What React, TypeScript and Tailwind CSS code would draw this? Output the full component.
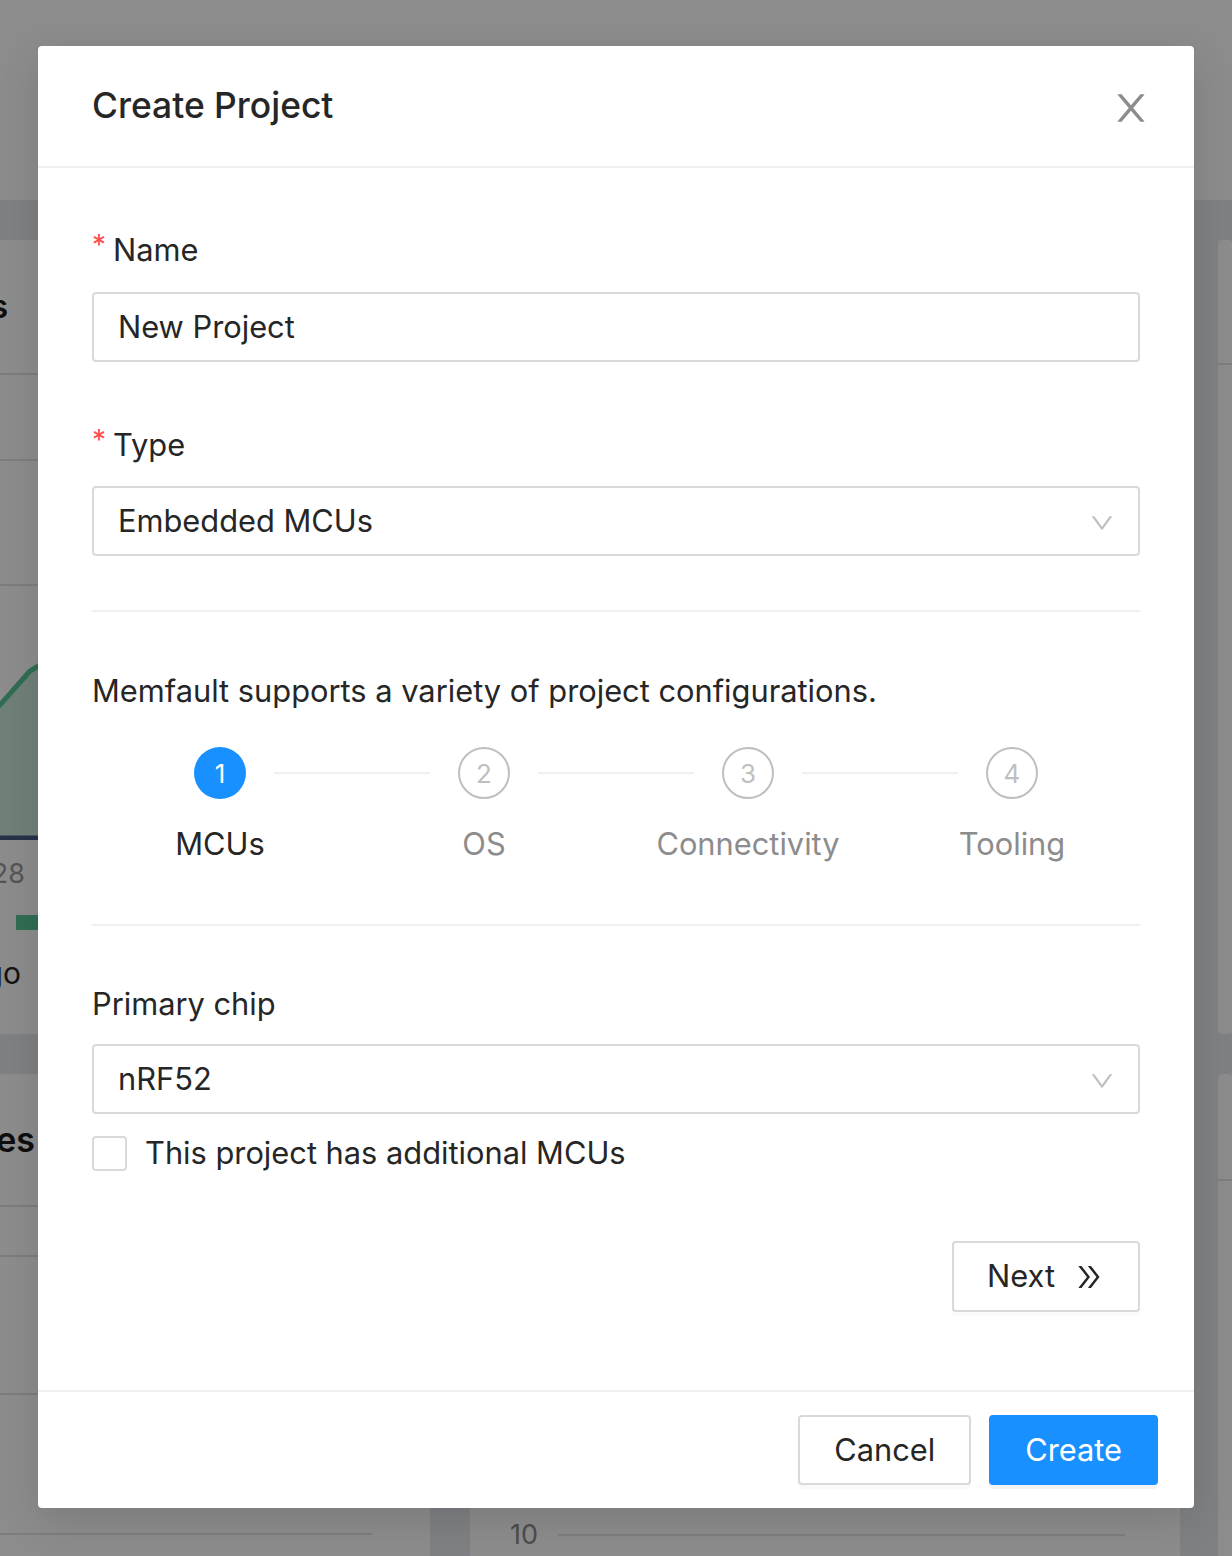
import React from 'react';

const STEPS = ['MCUs', 'OS', 'Connectivity', 'Tooling'];

function Chevron() {
  return (
    <svg viewBox="64 64 896 896" className="mt-[4px] h-[24px] w-[24px]" fill="#bfbfbf">
      <path d="M884 256h-75c-5.1 0-9.9 2.5-12.9 6.6L512 654.2 227.9 262.6c-3-4.1-7.8-6.6-12.9-6.6h-75c-6.5 0-10.3 7.4-6.5 12.7l352.6 486.1c12.8 17.6 39 17.6 51.7 0l352.6-486.1c3.9-5.3.1-12.7-6.4-12.7z" />
    </svg>
  );
}

function RequiredLabel({ children }: { children: React.ReactNode }) {
  return (
    <div className="flex h-[44px] items-center text-[30.8px] text-[#262626]">
      <span className="-mt-[10px] mr-[7px] text-[28px] leading-none text-[#ff4d4f]">*</span>
      {children}
    </div>
  );
}

function SelectBox({ value }: { value: string }) {
  return (
    <div className="flex h-[70px] items-center justify-between rounded-[4px] border-2 border-[#d9d9d9] pl-[24px] pr-[24px] text-[30.8px] text-[#262626]">
      <span>{value}</span>
      <Chevron />
    </div>
  );
}

// ── Dimmed page behind the modal ─────────────────────────────────────────────
function BackgroundPage() {
  return (
    <div className="flex h-full flex-col">
      <div className="h-[200px] shrink-0 bg-white" />
      <div className="flex flex-col gap-[40px] pt-[40px]">
        {/* Row 1 */}
        <div className="flex h-[794px]">
          <div className="-ml-[160px] flex w-[1340px] flex-col rounded-[4px] bg-white">
            <div className="flex h-[135px] items-center border-b-2 border-[#e3e3e3]">
              <div className="w-[168px] whitespace-nowrap text-right text-[32px] font-semibold text-[#1a1a1a]">
                Devices
              </div>
            </div>
            <svg width="1340" height="465" className="block">
              <line x1="0" y1="85" x2="1340" y2="85" stroke="#e3e3e3" strokeWidth="2" />
              <line x1="0" y1="210" x2="1340" y2="210" stroke="#e3e3e3" strokeWidth="2" />
              <line x1="0" y1="335" x2="1340" y2="335" stroke="#e3e3e3" strokeWidth="2" />
              <path d="M100 380 L160 330 L190 296 L200 290 L400 270 L400 463 L100 463 Z" fill="#cdeadd" />
              <path d="M100 380 L160 330 L190 296 L200 290 L400 270" fill="none" stroke="#58c698" strokeWidth="5" />
              <line x1="0" y1="463" x2="1340" y2="463" stroke="#4b5a86" strokeWidth="5" />
            </svg>
            <div className="mt-[14px] flex h-[40px] items-center">
              <div className="w-[185px] whitespace-nowrap text-right text-[27px] text-[#9a9a9a]">Jan 28</div>
            </div>
            <div className="mt-[21px] flex h-[15px] pl-[176px]">
              <div className="h-[15px] w-[260px] bg-[#58c698]" />
            </div>
            <div className="mt-[21px] flex h-[44px] items-center">
              <div className="w-[181px] whitespace-nowrap text-right text-[30px] text-[#262626]">2 days ago</div>
            </div>
          </div>
          <div className="ml-[38px] flex-1 rounded-[4px] bg-white">
            <div className="h-[125px] border-b-2 border-[#e3e3e3]" />
          </div>
        </div>
        {/* Row 2 */}
        <div className="flex h-[600px]">
          <div className="-ml-[160px] flex w-[590px] flex-col rounded-[4px] bg-white pr-[58px]">
            <div className="flex h-[133px] shrink-0 items-center border-b-2 border-[#e3e3e3]">
              <div className="w-[195px] whitespace-nowrap text-right text-[34px] font-semibold text-[#1a1a1a]">
                Releases
              </div>
            </div>
            <div className="h-[50px] shrink-0 border-b-2 border-[#e3e3e3]" />
            <div className="h-[138px] shrink-0 border-b-2 border-[#e3e3e3]" />
            <div className="h-[140px] shrink-0 border-b-2 border-[#e3e3e3]" />
          </div>
          <div className="ml-[40px] flex w-[710px] flex-col rounded-[4px] bg-white pt-[440px]">
            <div className="flex h-[42px] items-center gap-[20px] pl-[40px] pr-[55px]">
              <span className="text-[27px] text-[#8c8c8c]">10</span>
              <div className="h-[2px] flex-1 bg-[#e3e3e3]" />
            </div>
          </div>
          <div className="ml-[38px] flex-1 rounded-[4px] bg-white">
            <div className="h-[107px] border-b-2 border-[#e3e3e3]" />
          </div>
        </div>
      </div>
    </div>
  );
}

// ── Create Project modal ─────────────────────────────────────────────────────
function Modal() {
  return (
    <div className="absolute left-[38px] top-[46px] w-[1156px] rounded-[4px] bg-white shadow-[0_13px_40px_rgba(0,0,0,0.12)]">
      {/* Header */}
      <div className="flex h-[122px] items-center justify-between border-b-2 border-[#f0f0f0] pl-[54px] pr-[44px]">
        <h2 className="text-[35.4px] font-medium text-[#262626]">Create Project</h2>
        <svg viewBox="64 64 896 896" className="mt-[3px] h-[38px] w-[38px]" fill="#8c8c8c">
          <path d="M563.8 512l262.5-312.9c4.4-5.2.7-13.1-6.1-13.1h-79.8c-4.7 0-9.2 2.1-12.3 5.7L511.6 449.8 295.1 191.7c-3-3.6-7.5-5.7-12.3-5.7H203c-6.8 0-10.5 7.9-6.1 13.1L459.4 512 196.9 824.9A7.96 7.96 0 00203 838h79.8c4.7 0 9.2-2.1 12.3-5.7l216.5-258.1 216.5 258.1c3 3.6 7.5 5.7 12.3 5.7h79.8c6.8 0 10.5-7.9 6.1-13.1L563.8 512z" />
        </svg>
      </div>

      {/* Body */}
      <div className="flex flex-col px-[54px] pb-[78px] pt-[60px]">
        <RequiredLabel>Name</RequiredLabel>
        <div className="mt-[20px] flex h-[70px] items-center rounded-[4px] border-2 border-[#d9d9d9] px-[24px] text-[30.8px] text-[#262626]">
          New Project
        </div>

        <div className="mt-[61px]">
          <RequiredLabel>Type</RequiredLabel>
        </div>
        <div className="mt-[19px]">
          <SelectBox value="Embedded MCUs" />
        </div>

        <div className="mt-[54px] h-[2px] bg-[#f0f0f0]" />

        <p className="mt-[57px] flex h-[44px] items-center text-[30.8px] text-[#262626]">
          Memfault supports a variety of project configurations.
        </p>

        {/* Steps */}
        <div className="-mx-[4px] mt-[34px] grid grid-cols-4">
          {STEPS.map((label, i) => {
            const active = i === 0;
            return (
              <div key={label} className="flex flex-col">
                <div className="flex items-center">
                  <div className="flex-1 pr-[28px]">
                    {i > 0 && <div className="h-[2px] bg-[#f0f0f0]" />}
                  </div>
                  <div
                    className={`flex h-[52px] w-[52px] items-center justify-center rounded-full text-[26px] ${
                      active ? 'bg-[#1890ff] text-white' : 'border-2 border-[#bfbfbf] text-[#bfbfbf]'
                    }`}
                  >
                    {i + 1}
                  </div>
                  <div className="flex-1 pl-[28px]">
                    {i < STEPS.length - 1 && <div className="h-[2px] bg-[#f0f0f0]" />}
                  </div>
                </div>
                <div
                  className={`mt-[23px] flex h-[44px] items-center justify-center text-[30.8px] ${
                    active ? 'text-[#262626]' : 'text-[#8c8c8c]'
                  }`}
                >
                  {label}
                </div>
              </div>
            );
          })}
        </div>

        <div className="mt-[58px] h-[2px] bg-[#f0f0f0]" />

        <div className="mt-[56px] flex h-[44px] items-center text-[30.8px] text-[#262626]">Primary chip</div>
        <div className="mt-[18px]">
          <SelectBox value="nRF52" />
        </div>

        <label className="mt-[22px] flex h-[35px] items-center gap-[18px] text-[30.8px] text-[#262626]">
          <span className="h-[35px] w-[35px] shrink-0 rounded-[4px] border-2 border-[#d9d9d9] bg-white" />
          This project has additional MCUs
        </label>

        <div className="mt-[70px] flex justify-end">
          <button className="flex h-[71px] items-center gap-[20px] rounded-[4px] border-2 border-[#d9d9d9] bg-white pl-[33px] pr-[35px] text-[30.8px] text-[#262626] shadow-[0_4px_0_rgba(0,0,0,0.02)]">
            Next
            <svg viewBox="64 64 896 896" className="h-[28px] w-[28px]" fill="#262626">
              <path d="M533.2 492.3L277.9 166.1c-3-3.9-7.7-6.1-12.6-6.1H188c-6.7 0-10.4 7.7-6.3 12.9L447.1 512 181.7 851.1A7.98 7.98 0 00188 864h77.3c4.9 0 9.6-2.3 12.6-6.1l255.3-326.1c9.1-11.7 9.1-27.9 0-39.5zm304 0L581.9 166.1c-3-3.9-7.7-6.1-12.6-6.1H492c-6.7 0-10.4 7.7-6.3 12.9L751.1 512 485.7 851.1A7.98 7.98 0 00492 864h77.3c4.9 0 9.6-2.3 12.6-6.1l255.3-326.1c9.1-11.7 9.1-27.9 0-39.5z" />
            </svg>
          </button>
        </div>
      </div>

      {/* Footer */}
      <div className="flex justify-end gap-[18px] border-t-2 border-[#f0f0f0] pb-[23px] pr-[36px] pt-[23px]">
        <button className="h-[70px] rounded-[4px] border-2 border-[#d9d9d9] bg-white px-[34px] text-[30.8px] text-[#262626] shadow-[0_4px_0_rgba(0,0,0,0.02)]">
          Cancel
        </button>
        <button className="h-[70px] rounded-[4px] border-2 border-[#1890ff] bg-[#1890ff] px-[34px] text-[30.8px] text-white shadow-[0_4px_0_rgba(0,0,0,0.045)]">
          Create
        </button>
      </div>
    </div>
  );
}

export default function App() {
  return (
    <div className="relative h-[1556px] w-[1232px] overflow-hidden bg-[#e8eaee] font-['Inter',sans-serif]">
      <BackgroundPage />
      <div className="absolute inset-0 bg-black/45" />
      <Modal />
    </div>
  );
}
